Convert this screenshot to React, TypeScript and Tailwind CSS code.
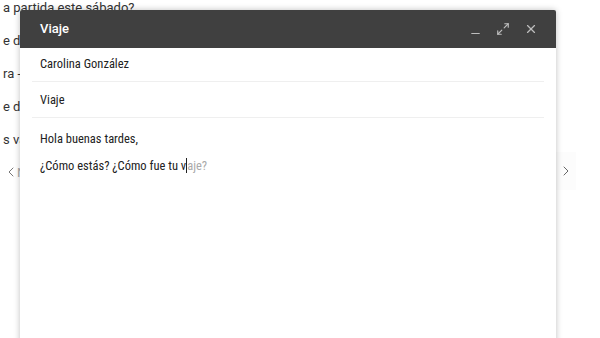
import { Minus, Maximize2, X, ChevronLeft, ChevronRight } from "lucide-react"

const backgroundRows = [
  { text: "a partida este sábado?", muted: false },
  { text: "e del viaje de fin de semana", muted: false },
  { text: "ra - Reunión de equipo", muted: false },
  { text: "e de la presentación", muted: false },
  { text: "s vacaciones de verano", muted: false },
  { text: "Newsletter semanal", muted: true },
]

export default function App() {
  return (
    <div
      className="relative h-[338px] w-[600px] overflow-hidden bg-white text-[13px] text-[#222]"
      style={{ fontFamily: "Roboto, 'Noto Sans', sans-serif" }}
    >
      {/* Inbox list behind the compose window */}
      <div className="-mt-[9px] flex flex-col pl-[3px]">
        {backgroundRows.map((row, i) => (
          <div
            key={i}
            className={`flex h-[33px] items-center whitespace-nowrap ${
              row.muted ? "pl-[14px] text-[#aaa]" : "text-[#333]"
            }`}
          >
            {row.text}
          </div>
        ))}
      </div>

      {/* Pager arrows */}
      <ChevronLeft
        className="absolute left-[3px] top-[164px] h-[16px] w-[16px] text-[#777]"
        strokeWidth={1.5}
      />
      <div className="absolute left-[556px] top-[152px] flex h-[38px] w-[20px] items-center justify-center bg-[#fcfcfc]">
        <ChevronRight className="h-[16px] w-[16px] text-[#666]" strokeWidth={1.5} />
      </div>

      {/* Compose window */}
      <div className="absolute left-[20px] top-[10px] flex h-[360px] w-[536px] flex-col rounded-t-[2px] bg-white shadow-[0_0_6px_rgba(0,0,0,0.25)]">
        <div className="flex h-[38px] items-center justify-between rounded-t-[2px] bg-[#404040] pl-[20px] pr-[18px]">
          <span className="text-[13px] font-medium text-white">Viaje</span>
          <div className="flex items-center gap-[14px] text-[#bdbdbd]">
            <Minus className="mt-[8px] h-[13px] w-[13px]" strokeWidth={2} />
            <Maximize2 className="h-[14px] w-[14px]" strokeWidth={2} />
            <X className="h-[14px] w-[14px]" strokeWidth={2} />
          </div>
        </div>

        <div
          className="flex flex-col px-[12px] text-[12.5px]"
          style={{ fontFamily: "'Liberation Sans Narrow', 'Roboto Condensed', Roboto, sans-serif" }}
        >
          <div className="flex h-[34px] items-center border-b border-[#efefef] pl-[8px]">
            Carolina González
          </div>
          <div className="flex h-[36px] items-center border-b border-[#efefef] pl-[8px] pt-[2px]">
            Viaje
          </div>
          <div className="flex flex-col gap-[7px] pl-[8px] pt-[12px] leading-[18px]">
            <p>Hola buenas tardes,</p>
            <p>
              ¿Cómo estás? ¿Cómo fue tu v
              <span className="inline-block h-[15px] w-px translate-y-[3px] bg-[#222]" />
              <span className="text-[#aaa]">aje?</span>
            </p>
          </div>
        </div>
      </div>
    </div>
  )
}
